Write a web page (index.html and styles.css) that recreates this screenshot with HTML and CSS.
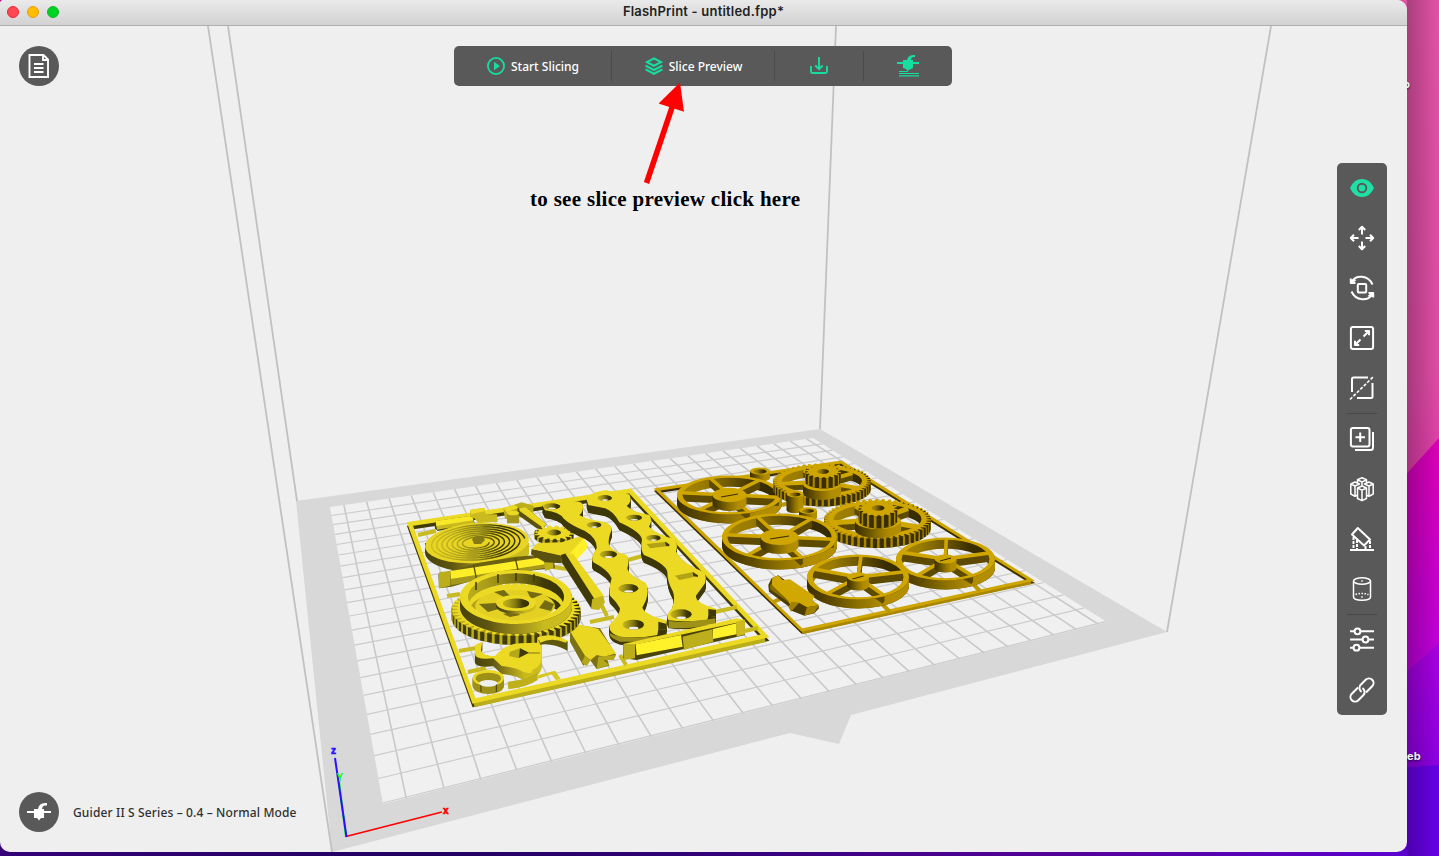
FILE: index.html
```html
<!DOCTYPE html>
<html lang="en">
<head>
<meta charset="utf-8">
<title>FlashPrint - untitled.fpp*</title>
<link rel="stylesheet" href="styles.css">
</head>
<body>
<div class="desktop">
  <svg class="wallpaper" viewBox="0 0 1439 856">
    <defs>
      <linearGradient id="pink" x1="0" y1="0" x2="0" y2="1"><stop offset="0" stop-color="#df52a4"/><stop offset=".75" stop-color="#dc4ba3"/><stop offset="1" stop-color="#dc38a8"/></linearGradient>
      <linearGradient id="mag" x1="0" y1="0" x2="0" y2="1"><stop offset="0" stop-color="#d900b4"/><stop offset="1" stop-color="#b800e0"/></linearGradient>
      <linearGradient id="vio" x1="0" y1="0" x2="0" y2="1"><stop offset="0" stop-color="#a800de"/><stop offset="1" stop-color="#8400e2"/></linearGradient>
      <linearGradient id="floor"><stop offset="0" stop-color="#350078"/><stop offset=".3" stop-color="#210060"/><stop offset=".5" stop-color="#320078"/><stop offset=".75" stop-color="#540098"/><stop offset="1" stop-color="#5c00d0"/></linearGradient>
      <linearGradient id="shade"><stop offset="0" stop-color="#000" stop-opacity=".24"/><stop offset="1" stop-color="#000" stop-opacity="0"/></linearGradient>
    </defs>
    <rect width="1439" height="500" fill="url(#pink)"/>
    <path d="M1400 481L1439 438V700H1400z" fill="url(#mag)"/>
    <path d="M1400 678L1439 643V800H1400z" fill="url(#vio)"/>
    <path d="M1400 768L1439 765V856H1400z" fill="#6500e2"/>
    <path d="M0 840H1407V856H0z" fill="url(#floor)"/>
    <rect x="1407" width="30" height="856" fill="url(#shade)"/>
    <rect width="9" height="9" fill="#b0109a"/>
  </svg>
  <span class="file-label file-label-top">p</span>
  <span class="file-label file-label-bottom">eb</span>

  <main class="window">
    <header class="titlebar">
      <span class="lights"><i class="light red"></i><i class="light amber"></i><i class="light green"></i></span>
      <h1 class="title">FlashPrint - untitled.fpp*</h1>
    </header>
    <section class="stage">
      <svg class="scene" id="scene" viewBox="0 26 1407 826"></svg>

      <button class="round file-button" aria-label="File">
        <svg viewBox="0 0 40 40"><path d="M10.500 9H24.500L29 13.500V31H10.500zM24 9V14H29M15 18H24.500M15 22H24.500M15 26H24.500" fill="none" stroke="#fff" stroke-width="1.900"/></svg>
      </button>

      <nav class="toolbar">
        <button class="tool start"><svg width="18" height="18" viewBox="0 0 18 18"><circle cx="9" cy="9" r="8.100" fill="none" stroke="#16dda0" stroke-width="1.800"/><path d="M7 4.800L13 9L7 13.200z" fill="#16dda0"/></svg><span>Start Slicing</span></button>
        <button class="tool preview"><svg width="18" height="18" viewBox="0 0 18 18"><g fill="none" stroke="#16dda0" stroke-width="2.200"><path d="M9 1.400L16 5.100L9 8.800L2 5.100z"/><path d="M.6 8.600L9 13L17.400 8.600M.6 12.400L9 16.800L17.400 12.400"/></g></svg><span>Slice Preview</span></button>
        <button class="tool save" aria-label="Save"><svg width="18" height="18" viewBox="0 0 18 18"><path d="M9 0V12M5.300 8.500L9 12.200L12.700 8.500M1 9V14.500Q1 16 2.500 16H15.500Q17 16 17 14.500V9" fill="none" stroke="#16dda0" stroke-width="1.900"/></svg></button>
        <button class="tool print" aria-label="Print"><svg width="22" height="22" viewBox="0 0 22 22"><path d="M0 7H6V5H10Q11 0 17 0H18V2H17Q14 2 14 5H16V7H22V9H16V13L12 15L11 16L9 14L6 13V9H0z" fill="#16dda0"/><path d="M2 16.500H11M2 18.500H22M2 20.900H22" stroke="#16dda0" stroke-width="1.100"/></svg></button>
      </nav>

      <aside class="rail">
        <svg class="ico" viewBox="0 0 24 24"><path d="M0 12Q4 3 12 3T24 12Q20 21 12 21T0 12z" fill="#1fdfa6"/><circle cx="12" cy="12" r="4.300" fill="none" stroke="#595959" stroke-width="1.900"/></svg>
        <svg class="ico line" viewBox="0 0 24 24"><path d="M12 8.500V1M8.800 4L12 .8L15.200 4M12 15.500V23M8.800 20L12 23.200L15.200 20M8.500 12H1M4 8.800L.8 12L4 15.200M15.500 12H23M20 8.800L23.200 12L20 15.200"/></svg>
        <svg class="ico line" viewBox="0 0 24 24"><rect x="7.800" y="8" width="8.400" height="8.400" rx="1"/><path d="M1.800 5.500C6 -1.200 18-1.500 22.500 8.500M22.200 18.500C18 25.200 6 25.500 1.500 15.500M.8 2.500V7H5.500M5.500 3.500L1.500 7M23.200 21.500V17H18.500M18.500 20.500L22.500 17"/></svg>
        <svg class="ico line" viewBox="0 0 24 24"><rect x=".9" y=".9" width="22.200" height="22.200" rx="2"/><path d="M13.500 10.500L19 5M14.800 5H19V9.200M10.500 13.500L5 19M5 14.800V19H9.200"/></svg>
        <svg class="ico line" viewBox="0 0 24 24"><path d="M2 16V3Q2 1.500 3.500 1.500H18M22.500 7V20.500Q22.500 22 21 22H7"/><path d="M0 23.500L24 0" stroke-dasharray="3.200 1.600" stroke-width="1.600"/></svg>
        <hr class="rule">
        <svg class="ico line" viewBox="0 0 24 24"><rect x=".9" y=".9" width="18.600" height="18.600" rx="2"/><path d="M10.200 5.500V15M5.500 10.200H15M23 5V20.500Q23 23 20.500 23H5"/></svg>
        <svg class="ico line thin" viewBox="0 0 24 24"><path d="M7.500 2.800L12 .8L16.500 2.800L12 5zM.8 7L5 5L9.500 7L5 9zM14.500 7L19 5L23.200 7L19 9zM7.500 11L12 9L16.500 11L12 13.200zM.8 7V17L5 19.300V9M7.500 11V21.500L12 23.700L16.500 21.500V11M12 13.200V23.700M19 9V19.300L23.200 17V7M7.500 2.800V6M16.500 2.800V6M12 5V9M5 19.300L7.500 18M19 19.300L16.500 18"/></svg>
        <svg class="ico line" viewBox="0 0 24 24"><path d="M7.800 1L20 12.500L14 18.500L2 7.500z"/><path d="M0 23H24"/><path d="M3.500 10V23M7 13V23M15.500 19V23M20 14V23" stroke-dasharray="3 1"/></svg>
        <svg class="ico line thin" viewBox="0 0 24 24"><ellipse cx="12" cy="4" rx="8.500" ry="3.200"/><path d="M3.500 4V20C3.500 24.300 20.500 24.300 20.500 20V4"/><path d="M5.500 17.500Q12 15.500 18.500 17.500" stroke-dasharray="1.500 1.500"/><path d="M11.300 4H12.700M11.300 20H12.700"/></svg>
        <hr class="rule">
        <svg class="ico line" viewBox="0 0 24 24"><path d="M0 3.300H4.500M10.500 3.300H24M0 11.500H12.500M18.500 11.500H24M0 19.700H3.500M9.500 19.700H24"/><circle cx="7.500" cy="3.300" r="2.900"/><circle cx="15.500" cy="11.500" r="2.900"/><circle cx="6.500" cy="19.700" r="2.900"/></svg>
        <svg class="ico line" viewBox="0 0 24 24"><g transform="rotate(-45 12 12)"><path d="M11 7.400H2.200A4.600 4.600 0 0 0 2.200 16.600H9.500A4.600 4.600 0 0 0 13.600 11"/><path d="M13 16.600H21.800A4.600 4.600 0 0 0 21.800 7.400H14.500A4.600 4.600 0 0 0 10.400 13"/></g></svg>
      </aside>

      <footer class="machine">
        <span class="round"><svg viewBox="0 0 40 40"><path d="M8 19H15V17H19Q20 11 26 11H28V13.500H26Q23.500 13.500 23 17H25V19H32V21H25V26H22L20 28.500L18 26H15V21H8z" fill="#fff"/></svg></span>
        <span class="machine-name">Guider II S Series – 0.4 – Normal Mode</span>
      </footer>

      <p class="note">to see slice preview click here</p>
      <svg class="arrow" viewBox="0 0 50 110"><path d="M16.500 104L42.500 27" stroke="#f00" stroke-width="5.500"/><path d="M50 3.500L28.600 24.500L54 32.800z" fill="#f00"/></svg>
    </section>
  </main>
</div>
<script src="scene.js"></script>
</body>
</html>
```
FILE: styles.css
```css
* { box-sizing: border-box; }
body { margin: 0; overflow: hidden; }
.desktop { position: relative; width: 1439px; height: 856px; overflow: hidden; background: #2a0070; }
.wallpaper { position: absolute; left: 0; top: 0; width: 1439px; height: 856px; }
.file-label { position: absolute; color: #eee; font: 700 11px/14px Inter, sans-serif; text-shadow: 0 1px 2px rgba(0,0,0,.7); }
.file-label-top { left: 1403px; top: 77px; }
.file-label-bottom { left: 1407px; top: 749px; letter-spacing: .3px; }
.window { position: relative; width: 1407px; height: 852px; display: flex; flex-direction: column; background: #efefef; border-radius: 4px 10px 10px 10px; overflow: hidden; }
.titlebar { height: 26px; flex: none; display: grid; grid-template-columns: 1fr auto 1fr; align-items: center; padding-bottom: 2px; background: linear-gradient(#eaeaea, #d2d2d2); border-bottom: 1px solid #b0b0b0; }
.lights { display: flex; gap: 8px; padding-left: 7px; }
.light { width: 12px; height: 12px; border-radius: 50%; border: 1px solid; }
.red { background: #ff4651; border-color: #e8283a; }
.amber { background: #ffbc00; border-color: #e0a010; }
.green { background: #00d422; border-color: #12b52a; }
.title { margin: 0; padding-bottom: 1px; font: 600 13px/16px Inter, sans-serif; color: #222; letter-spacing: .2px; }
.stage { position: relative; flex: 1; }
.scene { display: block; width: 1407px; height: 826px; }
button { border: 0; padding: 0; margin: 0; background: none; }
.round { display: block; flex: none; width: 40px; height: 40px; border-radius: 50%; background: #595959; }
.round svg { display: block; width: 40px; height: 40px; }
.file-button { position: absolute; left: 19px; top: 20px; }
.toolbar { position: absolute; left: 454px; top: 20px; width: 498px; height: 40px; display: flex; align-items: center; background: #595959; border-radius: 5px; }
.tool { height: 30px; display: flex; align-items: center; justify-content: center; gap: 6px; color: #fff; font: 500 12px/16px "Noto Sans", sans-serif; border-left: 1px solid #4b4b4b; white-space: nowrap; }
.tool svg { flex: none; }
.tool span { padding-top: 2px; }
.start { width: 157px; border-left: 0; padding-left: 1px; }
.preview { width: 163px; padding-left: 1px; }
.save { width: 89px; }
.print { width: 89px; }
.rail { position: absolute; left: 1337px; top: 137px; width: 50px; height: 552px; padding-top: 13px; display: flex; flex-direction: column; align-items: center; gap: 26px; background: #595959; border-radius: 5px; }
.ico { display: block; flex: none; width: 24px; height: 24px; overflow: visible; }
.line { fill: none; stroke: #fff; stroke-width: 2; stroke-linejoin: round; }
.thin { stroke-width: 1.5; }
.rule { width: 30px; height: 1px; flex: none; border: 0; margin: -13px 0; background: #484848; }
.machine { position: absolute; left: 19px; top: 766px; display: flex; align-items: center; gap: 14px; }
.machine-name { padding-top: 2px; font: 500 12px/16px "Noto Sans", sans-serif; color: #303030; white-space: nowrap; letter-spacing: .14px; }
.note { position: absolute; left: 530px; top: 160px; margin: 0; font: 700 21px/26px "Liberation Serif", serif; color: #000; white-space: nowrap; letter-spacing: .3px; }
.arrow { position: absolute; left: 630px; top: 53px; width: 50px; height: 110px; overflow: visible; }
.axis { font: 700 10px "Liberation Sans", sans-serif; }
```
FILE: scene.js
```js
// Build plate, model geometry and axes, drawn into the viewport SVG.
const out = [];
const add = s => out.push(s);
const f = n => n.toFixed(1);

const Y = { top: '#ecd923', mid: '#bcae1b', dark: '#403a09', out: 'yo', inn: 'yi' };
const G = { top: '#cfa600', mid: '#a98800', dark: '#3b2e00', out: 'go', inn: 'gi' };
const grad = (id, stops) => `<linearGradient id="${id}">${stops.map((c, i) => `<stop offset="${i / (stops.length - 1)}" stop-color="${c}"/>`).join('')}</linearGradient>`;
add('<defs>' +
  grad('yo', ['#4a430a', '#5c5410', '#98891a', '#c9ba1e', '#cdbd1f']) +
  grad('yi', ['#c4b51d', '#a89b18', '#7e7412', '#403a09', '#353005']) +
  grad('ysp', ['#cdbd1f', '#b8aa1c', '#8d8216', '#403a09', '#353005']) +
  grad('go', ['#3b2e00', '#5f4c00', '#8c7000', '#b18c00', '#b38f00']) +
  grad('gi', ['#a88600', '#997b00', '#6d5700', '#3b2e00', '#332800']) + '</defs>');

// Plate and frame
add('<path d="M296 501L820 429L1167 632L851 715L839 744L790 733L332 852z" fill="#d8d8d8"/>');
add('<path d="M330 507L813 438L1107 622L383 804z" fill="#f0f0f0"/>');

// Unit square to plate quad
const [a, b, c, d] = [[330, 507], [813, 438], [1107, 622], [383, 804]];
const sx = a[0] - b[0] + c[0] - d[0], sy = a[1] - b[1] + c[1] - d[1];
const dx1 = b[0] - c[0], dx2 = d[0] - c[0], dy1 = b[1] - c[1], dy2 = d[1] - c[1];
const den = dx1 * dy2 - dx2 * dy1;
const g = (sx * dy2 - dx2 * sy) / den, h = (dx1 * sy - sx * dy1) / den;
const P = (u, v) => {
  const w = g * u + h * v + 1;
  return f(((b[0] - a[0] + g * b[0]) * u + (d[0] - a[0] + h * d[0]) * v + a[0]) / w) + ' ' +
         f(((b[1] - a[1] + g * b[1]) * u + (d[1] - a[1] + h * d[1]) * v + a[1]) / w);
};
let cols = '', rows = '';
for (let i = 0; i < 25; i++) cols += `M${P(.024 + i * .04, 0)}L${P(.024 + i * .04, 1)}`;
for (let j = 0; j < 20; j++) rows += `M${P(0, .998 - j * .05)}L${P(1, .998 - j * .05)}`;
add(`<path d="${cols}" stroke="#c9c9c9" stroke-width="1.6"/><path d="${rows}" stroke="#cccccc" stroke-width="1.2"/>`);
add('<path d="M208 26L332 852M228 26L297 501M836 26L820 429M1271 26L1167 632" stroke="#c1c1c1" stroke-width="1.8" fill="none"/>');

const ell = (x, y, rx, ry) => `M${f(x - rx)} ${f(y)}a${rx} ${ry} 0 1 0 ${2 * rx} 0a${rx} ${ry} 0 1 0 ${-2 * rx} 0z`;
const side = (x, y, rx, ry, hh, fill) => add(`<path d="M${x - rx} ${y}v${hh}a${rx} ${ry} 0 0 0 ${2 * rx} 0v${-hh}z" fill="${fill}"/>`);
const extrude = (p, hh, fill, top, step = 1) => {
  for (let k = hh; k > 0; k -= step) add(`<path d="${p}" transform="translate(0 ${k})" fill="${fill}" fill-rule="evenodd"/>`);
  add(`<path d="${p}" fill="${top}" fill-rule="evenodd"/>`);
};
const tube = (x, y, rx, ry, hh, m) => {
  side(x, y, rx, ry, hh, `url(#${m.out})`);
  add(`<path d="${ell(x, y, rx, ry)}" fill="${m.top}"/><path d="${ell(x, y + .4, rx * .66, ry * .62)}" fill="url(#${m.inn})"/>`);
};
function ring(x, y, rx, ry, t, hh, m) {
  const ir = rx - t, iy = ry - t * .42, p = ell(x, y, rx, ry) + ell(x, y, ir, iy);
  for (let k = hh; k > 0; k--) add(`<path d="${p}" transform="translate(0 ${k})" fill="url(#${m.inn})" fill-rule="evenodd"/>`);
  add(`<path d="M${x - rx} ${y}v${hh}a${rx} ${ry} 0 0 0 ${2 * rx} 0v${-hh}a${rx} ${ry} 0 0 1 ${-2 * rx} 0z" fill="url(#${m.out})"/>`);
  return () => add(`<path d="${p}" fill="${m.top}" fill-rule="evenodd"/>`);
}
function spokes(x, y, rx, ry, n, ph, hh, w, m) {
  let p = '';
  for (let i = 0; i < n; i++) { const t = ph + i * 2 * Math.PI / n; p += `M${x} ${y}L${f(x + rx * Math.cos(t))} ${f(y + ry * Math.sin(t))}`; }
  for (let k = hh; k > 0; k--) add(`<path d="${p}" transform="translate(0 ${k})" stroke="${m === G ? '#5e4b00' : m.dark}" stroke-width="${w}"/>`);
  add(`<path d="${p}" stroke="${m.top}" stroke-width="${w}"/>`);
}
function wheel(x, y, rx, ry, n, ph, hub, m) {
  const cap = ring(x, y, rx, ry, 5.5, 9, m);
  spokes(x, y, rx - 3, ry - 1, n, ph, 7, 3.6, m);
  side(x, y, hub, hub * .42, 9, `url(#${m.out})`);
  add(`<path d="${ell(x, y, hub, hub * .42)}" fill="${m.top}"/><path d="M${x - hub * .5} ${y + 2}l${hub} -3" stroke="${m.dark}" stroke-width="1.2"/>`);
  cap();
}
function teeth(x, y, rx, ry, n, dp, hh, m, hole, inside) {
  let p = '', faces = '', gaps = '';
  for (let i = 0; i < n; i++) {
    const q = [0, .2, .55, .75, 1.2].map(o => (i + o) * 2 * Math.PI / n);
    const pt = (t, r) => [x + (rx - r) * Math.cos(t), y + (ry - r * .42) * Math.sin(t)];
    const v = [pt(q[0], dp), pt(q[1], 0), pt(q[2], 0), pt(q[3], dp), pt(q[4], 0)];
    p += v.slice(0, 4).map((s, j) => (i || j ? 'L' : 'M') + f(s[0]) + ' ' + f(s[1])).join('');
    const quad = (s, e) => `M${f(s[0])} ${f(s[1])}L${f(e[0])} ${f(e[1])}v${hh}L${f(s[0])} ${f(s[1] + hh)}z`;
    if (Math.sin(q[1]) > -.15) {
      faces += quad(v[1], v[2]);
      gaps += quad(v[2], v[4]);
    }
  }
  p += 'z' + (hole ? ell(x, y, hole[0], hole[1]) : '');
  for (let k = hh; k > 0; k--) add(`<path d="${p}" transform="translate(0 ${k})" fill="${hole ? `url(#${m.inn})` : m.dark}" fill-rule="evenodd"/>`);
  if (inside) inside();
  add(`<path d="${gaps}" fill="${m.dark}"/><path d="${faces}" fill="${m.mid}"/><path d="${p}" fill="${m.top}" fill-rule="evenodd"/>`);
}
function frame(q, m, w, hh) {
  const p = 'M' + q.map(s => s.join(' ')).join('L') + 'z';
  add(`<path d="${p}" transform="translate(0 ${hh})" fill="none" stroke="${m.dark}" stroke-width="${w}"/>`);
  add(`<path d="M${q[3].join(' ')}L${q[2].join(' ')}" transform="translate(0 ${hh})" stroke="${m.mid}" stroke-width="${w + 1}"/>`);
  add(`<path d="${p}" fill="none" stroke="${m.top}" stroke-width="${w}"/>`);
}

// Right sprue
frame([[657, 489.5], [841, 462], [1031, 580], [802, 630]], G, 3, 2.2);
add('<path d="M782 505l14 -4M812 481l8-3M890 612l-8-8M980 591l-8-8M773 602l10-4" stroke="#bd9800" stroke-width="4"/>');
tube(760, 471, 10, 3.6, 7, G);
wheel(729.5, 495, 52.5, 19.5, 6, .12, 17, G);
teeth(822, 481, 49, 17.5, 50, 4, 8, G, [40, 12.5], () => spokes(822, 482, 42, 13, 5, .5, 5, 4, G));
side(822, 484, 19, 7, 9, 'url(#go)');
add(`<path d="${ell(822, 484, 19, 7)}" fill="${G.top}"/>`);
teeth(823, 471.500, 18, 7, 16, 3, 10, G);
add(`<path d="${ell(823, 471.5, 6, 2.6)}" fill="url(#gi)"/>`);
tube(795, 494, 8.5, 3.2, 16, G);
tube(808, 510.500, 9, 3.2, 7, G);
teeth(877.5, 519, 53.5, 20, 50, 4.500, 9, G, [44, 15], () => spokes(877, 520, 45, 16, 5, .45, 6, 5, G));
side(878, 521, 23, 8, 9, 'url(#go)');
add(`<path d="${ell(878, 521, 23, 8)}" fill="${G.top}"/>`);
teeth(878, 508.500, 19.5, 8, 16, 3, 12, G);
add(`<path d="${ell(878, 508, 6.5, 2.8)}" fill="url(#gi)"/>`);
wheel(779.5, 537, 57.5, 23.5, 6, .1, 19, G);
wheel(945.5, 559, 49.5, 21.5, 5, -.3, 11, G);
wheel(858, 577, 51, 22.5, 5, -.25, 11, G);
add(`<g transform="translate(645 450) scale(.3333)">
<path d="M370 405L380 385L400 376L520 465L522 475L508 490L478 497L440 482L432 470L372 425z" fill="#4c3c00"/>
<path d="M375 403L440 448L438 462L375 418z" fill="#856a00"/>
<path d="M382 383L400 376L412 390L435 388L508 438L502 452L522 466L486 472L462 458L440 472L428 450L380 405z" fill="#d1a800"/>
<path d="M462 458L438 485L430 470L440 455zM486 472L522 466L508 488L478 497z" fill="#a18100"/></g>`);

// Left sprue
frame([[410, 524], [630, 491], [765, 636], [474, 701]], Y, 4.6, 3.5);
add('<path d="M418 535L436 531M447 596L460 594M459 651L476 648M468 672L486 668M715 612l22-5M740 632l18-4M628 560l18-5M590 622l24-5M601 604l6 12M620 655l6 10M553 567l14 2" stroke="#c9ba20" stroke-width="4"/>');
// Model-local units: three per pixel
add('<g transform="translate(395 475) scale(.3333)">');
add(`<path d="M118 145L130 137L232 122L240 148L128 168L120 160z" fill="#4a430a"/><path d="M122 138L232 122L238 146L126 164z" fill="#c8b91e"/><path d="M122 138L232 122L235 136L124 153z" fill="#f8e827"/>
<path d="M225 105L268 98L272 118L306 118L308 140L250 145L238 130L225 126z" fill="#cbbb1f"/><path d="M225 105L268 98L272 108L228 118z" fill="#ecd923"/>
<path d="M325 100L380 82L416 92L414 120L390 126L330 132z" fill="#bdae1b"/><path d="M325 98L358 90L372 98L335 112z" fill="#ecd923"/>
<path d="M368 98L392 96L455 148L440 166L425 160L366 118z" fill="#5a510e"/><path d="M372 98L392 96L455 148L444 158L374 108z" fill="#ead722"/>
<path d="M336 115h36v30h-36z" fill="#a3961a"/><path d="${ell(354, 114, 18, 7)}" fill="#ecd923"/>`);
add('</g>');
side(477, 543, 52, 20, 9.500, 'url(#yo)');
add(`<g transform="rotate(-4 477 543)"><path d="${ell(477, 543, 52, 20)}" fill="#e8d523"/>`);
let sp = '';
for (let t = 0; t < 7 * 2 * Math.PI; t += .12) {
  const r = 12 + t * .82;
  sp += (t ? 'L' : 'M') + f(477 + r * Math.cos(t)) + ' ' + f(543 + r * .38 * Math.sin(t));
}
add(`<path d="${sp}" fill="none" stroke="url(#ysp)" stroke-width="1.5"/></g><path d="M472 539l4-3h7l2 4l-4 4h-7z" fill="#857a14"/>`);
teeth(554, 533, 20, 7.5, 16, 4, 4, Y);
add(`<path d="${ell(554, 532.5, 7, 3)}" fill="url(#yi)"/>`);
add('<g transform="translate(395 475) scale(.3333)">');
add(`<path d="M130 298L245 265L365 245L475 236L480 280L370 290L250 312L170 335L132 340z" fill="#6b6111"/>
<path d="M132 292L166 288V332L132 340z" fill="#bcae1b"/><path d="M166 288L445 246L450 270L168 314z" fill="#fdee28"/><path d="M166 312L450 268L452 278L168 331z" fill="#a5981a"/>
<path d="M446 240L475 236V280L450 288z" fill="#bfb01a"/><path d="M236 270L244 310M361 250L369 285" stroke="#5a510e" stroke-width="4"/>
<path d="M410 222L500 240L500 265L450 262L408 238z" fill="#5a510e"/>
<path d="M578 208L575 222L545 254L525 236z" fill="#fff02a"/><path d="M560 182L578 208L540 250L522 238z" fill="#fff02a"/>
<path d="M410 222L428 204L500 202L560 182L566 190L522 238L500 242z" fill="#ead722"/>
<path d="M498 240L515 234L604 375L590 402L500 262z" fill="#403a09"/>
<path d="M510 234L534 236L628 364L600 374z" fill="#ead722"/>
<path d="M592 372L624 362L630 382L612 405L588 402z" fill="#c4b51d"/></g>`);

const arms = [
  'M-83 90Q-70 80 -20 80Q30 74 38 88Q42 110 28 120Q50 134 100 140Q128 150 125 165Q112 195 118 212Q130 230 170 240Q180 255 172 280Q175 300 225 322Q240 340 228 375L217 398Q225 420 290 436L288 464L265 463L262 480Q200 492 150 485Q115 475 118 450Q150 420 150 400Q140 380 120 362Q115 345 125 310Q115 285 70 262Q60 250 80 220Q82 190 45 168Q0 150 -20 130Q-30 112 -75 106z',
  'M50 75Q55 52 110 45Q135 56 178 58Q188 80 170 92Q185 110 238 120Q250 135 237 155Q265 182 315 192Q325 210 318 230Q340 268 400 290Q412 300 405 325L378 362Q375 385 436 400V426L415 422L412 436Q340 442 296 436Q285 420 305 402Q318 370 308 348Q292 320 292 290Q285 265 222 240Q210 225 216 195Q215 172 148 142Q130 108 105 100L55 90z'];
add('<g transform="translate(570 475) scale(.3333)">');
arms.forEach(p => extrude(p, 24, '#3f3909', Y.top, 2));
[[-55, 94, 26, 9], [72, 150, 22, 9], [115, 238, 26, 11], [175, 340, 30, 13], [190, 449, 32, 15], [104, 69, 22, 9], [192, 128, 24, 9], [250, 189, 22, 9], [333, 418, 32, 15]]
  .forEach(e => add(`<path d="${ell(...e)}" fill="url(#yi)"/><path d="${ell(e[0] + 1, e[1] + e[3] * .7, e[2] * .45, e[3] * .27)}" fill="#eee"/>`));
add(`<path d="M230 207L290 200L298 213L240 220zM315 302L370 291L383 304L328 315z" fill="#b0a318"/><path d="M285 200L298 208V214L288 213zM368 291L384 301V306L370 303z" fill="#403a09"/>
<path d="M265 440L288 446V464H265zM415 402L438 405V425H415z" fill="#403a09"/><path d="M120 475Q150 495 262 483V500H150Q120 490 118 475zM296 438Q340 445 436 430V445Q360 465 296 458z" fill="#9e9118"/>
<path d="M160 508L200 502L525 435V480L200 555L160 550z" fill="#4a430a"/><path d="M160 507L195 504V550L162 555z" fill="#bcae1b"/>
<path d="M160 507L500 430L525 435L500 443L200 508z" fill="#ecd923"/><path d="M197 508L333 480L338 515L200 541zM428 462L500 445V478L428 492z" fill="#fff22a"/><path d="M338 485L426 463L430 500L342 525z" fill="#bdae1b"/><path d="M498 440L525 434V478L500 485z" fill="#cbbb20"/>
<path d="M0 475L20 450L90 460L138 540L130 555L110 548L118 572L80 582L60 555L40 572L0 500z" fill="#7d7213"/>
<path d="M2 470L18 448L60 455L85 462L138 535L102 545L80 540L62 555L45 542L8 482z" fill="#ead722"/><path d="M45 542L62 555L50 574L35 562zM85 545L138 540L130 555L100 555L118 570L80 582z" fill="#b5a71a"/></g>`);

// Large compound gear
teeth(516, 609, 64.5, 27, 50, 6, 9, Y, [46, 17]);
const cap = ring(516, 597, 56, 27, 8, 10, Y);
add(`<path d="${ell(515, 606, 40, 16)}" fill="#e3d022"/>`);
add(`<path d="M479 604l17 -1l6 5l-14 4zM494 592l10 -2l6 6l-6 1zM527 591l16 3l-12 5zM545 600l9 4l-3 7l-12-3zM503 614l12-3l5 4l-10 2z" fill="#756b12"/>`);
tube(516, 603, 20, 8, 3, Y);
cap();
add('<path d="M476 582v8M498 574v9M516 573v8M534 574v8" stroke="#403a09" stroke-width="1.500"/>');

// Hook, collar and runner
add('<g transform="translate(395 580) scale(.3333)">');
extrude('M240 195L262 185L258 212Q265 228 300 228Q330 192 375 190L428 188V170L440 190V240Q435 262 412 270Q415 285 385 276Q360 262 320 258L295 235Q240 240 240 222z', 24, 'url(#yo)', Y.top, 2);
add(`<path d="M345 215L375 205L402 218L370 235L342 228z" fill="#b5a71a"/><path d="M375 205L402 218L372 233z" fill="#403a09"/><path d="M400 219L435 219" stroke="#847914" stroke-width="3"/>
<path d="M430 180Q470 162 518 184V212Q470 188 436 194z" fill="#5f560e"/><path d="M428 172Q470 155 518 182L512 188Q470 170 436 188z" fill="#ecd923"/><path d="M338 305Q400 300 428 275V300Q400 320 340 328z" fill="#bfb01a"/>
<path d="M428 286L480 272L498 298L482 300L470 283L430 296z" fill="#d8c721"/>`);
const collar = ell(280, 294, 47, 24) + ell(280, 295, 38, 17);
for (let k = 24; k > 0; k -= 2) add(`<path d="${collar}" transform="translate(0 ${k})" fill="#9e9118" fill-rule="evenodd"/>`);
add(`<path d="${collar}" fill="${Y.top}" fill-rule="evenodd"/><path d="M258 312v24M304 312v24" stroke="#403a09" stroke-width="3"/><path d="${ell(280, 310, 27, 10)}" fill="#efefef"/>`);
add('</g>');

// Axes
add('<path d="M346 837L339 781" stroke="#0f0" stroke-width="2"/><path d="M346 836.500L442 812" stroke="#f00" stroke-width="1.800"/><path d="M346.500 837L335 758" stroke="#2a10ff" stroke-width="2"/>');
add('<text class="axis" x="331" y="754" fill="#2a10ff" stroke="#2a10ff" stroke-width=".6">z</text><text class="axis" x="336.500" y="781" font-size="8" fill="#0f0">Y</text><text class="axis" x="443" y="814" fill="#f00" stroke="#f00" stroke-width=".6">x</text>');
document.getElementById('scene').innerHTML = out.join('');
```
